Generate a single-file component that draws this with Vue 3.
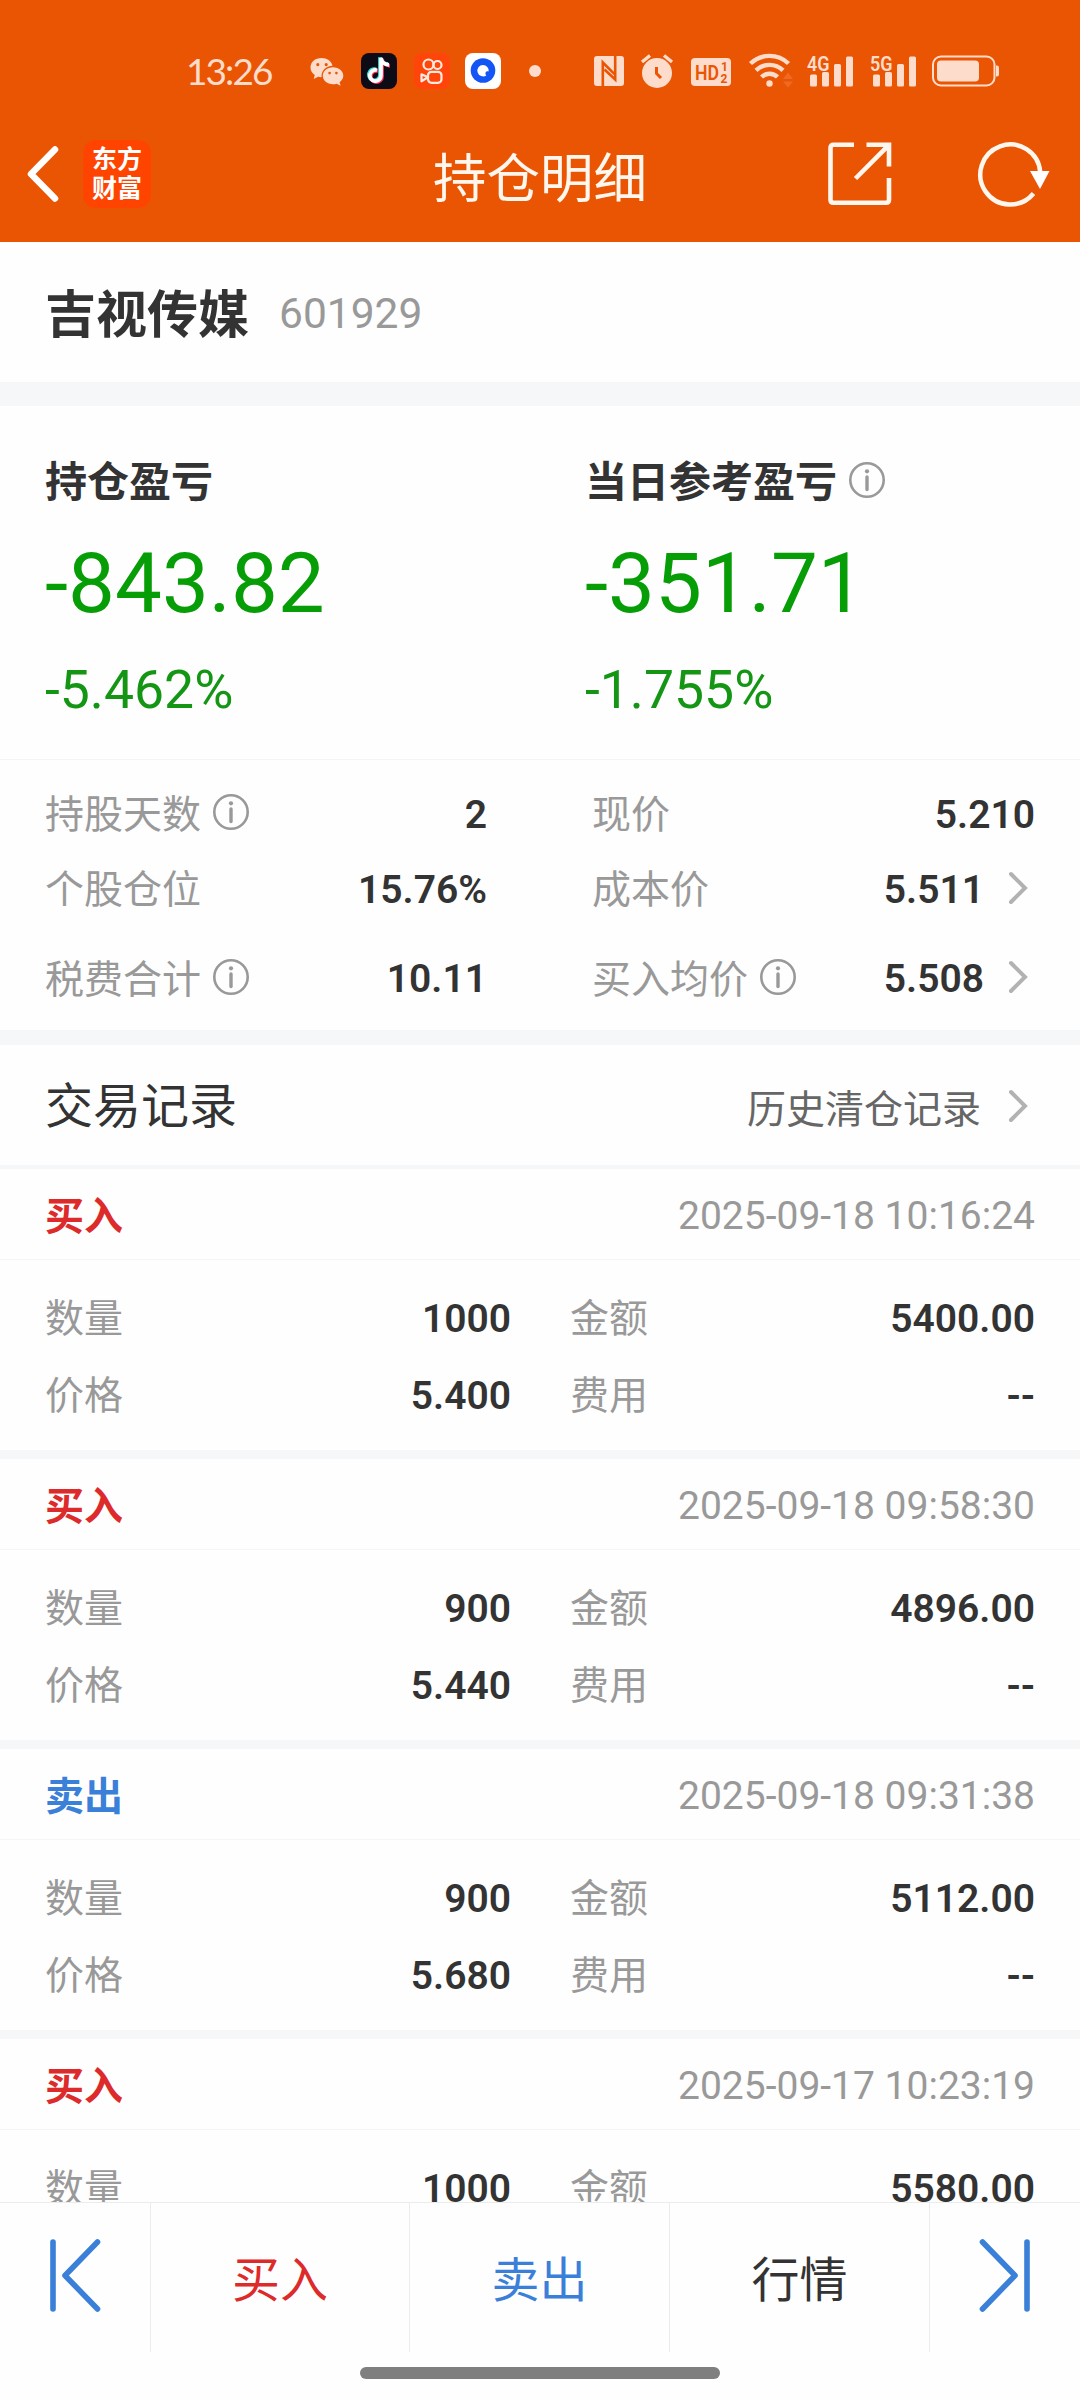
<script setup>
import { ref } from 'vue'

const stock = ref({ name: '吉视传媒', code: '601929' })

const summary = ref([
  { title: '持仓盈亏', amount: '-843.82', rate: '-5.462%', info: false },
  { title: '当日参考盈亏', amount: '-351.71', rate: '-1.755%', info: true }
])

const details = ref([
  { label: '持股天数', value: '2', info: true },
  { label: '现价', value: '5.210' },
  { label: '个股仓位', value: '15.76%' },
  { label: '成本价', value: '5.511', link: true },
  { label: '税费合计', value: '10.11', info: true },
  { label: '买入均价', value: '5.508', info: true, link: true }
])

const records = ref([
  { type: 'buy', time: '2025-09-18 10:16:24', count: '1000', amount: '5400.00', price: '5.400', fee: '--' },
  { type: 'buy', time: '2025-09-18 09:58:30', count: '900', amount: '4896.00', price: '5.440', fee: '--' },
  { type: 'sell', time: '2025-09-18 09:31:38', count: '900', amount: '5112.00', price: '5.680', fee: '--' },
  { type: 'buy', time: '2025-09-17 10:23:19', count: '1000', amount: '5580.00' }
])

const typeText = { buy: '买入', sell: '卖出' }
const networks = ['4G', '5G']
</script>

<template>
  <div class="page">
    <header class="top">
      <!-- 状态栏 -->
      <div class="status">
        <span class="clock">13:26</span>
        <svg class="s-wechat" width="34" height="30" viewBox="0 0 34 30">
          <path fill="#fddccb" fill-rule="evenodd" d="M11.5 1C5 1 .5 5 .5 10.5c0 3.200 1.600 5.800 4.300 7.500L3.700 22l4.300-2.300c1.200.3 2.300.5 3.500.5C11.200 13.500 16 9 22.500 8.800 21.500 4 17 1 11.500 1zM7.800 6a1.600 1.600 0 1 1 0 3.200 1.600 1.600 0 0 1 0-3.200zm8.400 0a1.600 1.600 0 1 1 0 3.200 1.600 1.600 0 0 1 0-3.200z" />
          <path fill="#fddccb" fill-rule="evenodd" d="M23 10.300c-5.800 0-10.200 3.700-10.200 8.500s4.400 8.500 10.200 8.500c1.300 0 2.500-.2 3.600-.6l4 2-1-3.500c2.300-1.600 3.700-3.800 3.700-6.400 0-4.800-4.500-8.500-10.300-8.500zm-3.400 4.500a1.300 1.300 0 1 1 0 2.600 1.300 1.300 0 0 1 0-2.600zm6.800 0a1.300 1.300 0 1 1 0 2.600 1.300 1.300 0 0 1 0-2.600z" />
        </svg>
        <svg class="s-tiktok" width="36" height="36" viewBox="0 0 36 36">
          <rect width="36" height="36" rx="8" fill="#0c0b16" />
          <g fill="none" stroke-width="3.800">
            <path stroke="#31e2e0" d="M16 17.200a5.600 5.600 0 1 0 4 5.300V5c.4 3.800 3.400 6.700 8 6.900" transform="translate(-1 -.8)" />
            <path stroke="#f5365c" d="M16 17.200a5.600 5.600 0 1 0 4 5.300V5c.4 3.800 3.400 6.700 8 6.900" transform="translate(1 .9)" />
            <path stroke="#fff" d="M16 17.200a5.600 5.600 0 1 0 4 5.300V5c.4 3.800 3.400 6.700 8 6.900" />
          </g>
        </svg>
        <svg class="s-kuaishou" width="36" height="36" viewBox="0 0 36 36">
          <rect width="36" height="36" rx="8" fill="#ff450a" />
          <g fill="none" stroke="#ffeadf" stroke-width="2.200">
            <circle cx="14.500" cy="11.500" r="5" />
            <circle cx="23.500" cy="12" r="4" />
            <rect x="14" y="18.800" width="13.500" height="11" rx="3.500" />
            <path d="M14 24.300l-6.500-3v7z" stroke-linejoin="round" />
          </g>
        </svg>
        <svg class="s-browser" width="36" height="36" viewBox="0 0 36 36">
          <rect width="36" height="36" rx="8" fill="#fff" />
          <circle cx="18" cy="17.500" r="12.300" fill="#1456f5" />
          <path fill="#fff" d="M18 12a5.700 5.700 0 0 1 5.700 6.400c-1.700-.4-3 .2-3.200 1.500-.2 1.200.3 1.900.8 2.500A5.700 5.700 0 1 1 18 12z" />
        </svg>
        <span class="dot"></span>

        <svg class="s-nfc" width="30" height="30" viewBox="0 0 30 30">
          <rect width="30" height="30" rx="3" fill="#fddccb" />
          <path d="M8.800 30V6.500L20.500 18.200M21.200 0v23.500L10.500 13.500" fill="none" stroke="#ea5504" stroke-width="2.600" />
        </svg>
        <svg class="s-alarm" width="32" height="34" viewBox="0 0 32 34">
          <circle cx="16" cy="19" r="15" fill="#fddccb" />
          <path d="M1 8l8-6.500M31 8l-8-6.500" stroke="#fddccb" stroke-width="3.500" />
          <path d="M15.500 13v6.500l4.500 4.500" fill="none" stroke="#ea5504" stroke-width="3" />
        </svg>
        <svg class="s-hd" width="40" height="28" viewBox="0 0 40 28">
          <rect width="40" height="28" rx="4" fill="#fddccb" />
          <text class="hd-text" x="4" y="21.500" textLength="24" lengthAdjust="spacingAndGlyphs">HD</text>
          <text class="hd-num" x="30" y="12.500">1</text>
          <text class="hd-num" x="29.500" y="24.500">2</text>
        </svg>
        <svg class="s-wifi" width="45" height="36" viewBox="0 0 45 36">
          <g fill="none" stroke="#fddccb" stroke-width="4.400">
            <path d="M1.500 11.500a27.500 27.500 0 0 1 38 0" />
            <path d="M7 18.300a19.500 19.500 0 0 1 27 0" />
            <path d="M12.500 25a11.500 11.500 0 0 1 16 0" />
          </g>
          <circle cx="20.500" cy="31.500" r="3.200" fill="#fddccb" />
          <path d="M39 20.500l5 6.500H34zM39 35.500l5-6H34z" fill="#f06a26" />
        </svg>
        <svg v-for="n in networks" :key="n" class="s-signal" width="47" height="34" viewBox="0 0 47 34">
          <text class="net-text" x="0" y="16.500" textLength="22.500" lengthAdjust="spacingAndGlyphs">{{ n }}</text>
          <g fill="#fddccb">
            <rect x="3" y="20.500" width="7" height="12" rx="1.500" />
            <rect x="15" y="18" width="7" height="14.500" rx="1.500" />
            <rect x="27" y="10" width="7" height="22.500" rx="1.500" />
            <rect x="39" y="2.500" width="7" height="30" rx="1.500" />
          </g>
        </svg>
        <svg class="s-battery" width="68" height="32" viewBox="0 0 68 32">
          <rect x="1" y="1.500" width="61.500" height="29" rx="8" fill="none" stroke="#fddccb" stroke-width="2" />
          <rect x="5" y="5.500" width="42" height="21" rx="4" fill="#fddccb" />
          <path d="M64 10.500h1q2 0 2 2v7q0 2-2 2h-1z" fill="#fddccb" />
        </svg>
      </div>

      <!-- 导航栏 -->
      <div class="nav">
        <div class="nav-side">
          <svg class="back" width="34" height="58" viewBox="0 0 34 58">
            <path d="M29 4.500L5 29l24 24.500" fill="none" stroke="#fff" stroke-width="6.500" stroke-linecap="round" stroke-linejoin="round" />
          </svg>
          <div class="logo"><span>东方</span><span>财富</span></div>
        </div>
        <h1 class="nav-title">持仓明细</h1>
        <div class="nav-side nav-right">
          <svg class="share" width="64" height="64" viewBox="0 0 64 64">
            <g fill="none" stroke="#fff7ee" stroke-width="4.600">
              <path d="M26 2.800H5.500q-3 0-3 3v52q0 3 3 3h52.500q3 0 3-3V36" />
              <path d="M38.500 2.800H61V24.500M61 2.800L27.500 36.500" />
            </g>
          </svg>
          <svg class="refresh" width="74" height="66" viewBox="0 0 74 66">
            <path d="M55.500 52.500A30 30 0 1 1 62.200 31" fill="none" stroke="#fff7ee" stroke-width="4.500" />
            <path d="M52 30h19.500L62 48z" fill="#fff" />
          </svg>
        </div>
      </div>
    </header>

    <section class="stock">
      <span class="stock-name">{{ stock.name }}</span>
      <span class="stock-code">{{ stock.code }}</span>
    </section>

    <section class="summary">
      <div v-for="s in summary" :key="s.title" class="summary-item">
        <div class="summary-title">
          {{ s.title }}
          <svg v-if="s.info" class="info" width="36" height="36" viewBox="0 0 36 36">
            <circle cx="18" cy="18" r="16.700" fill="none" stroke="#999" stroke-width="2.600" />
            <circle cx="18" cy="9.300" r="2.100" fill="#999" />
            <path d="M18 15v12.500" stroke="#999" stroke-width="3.400" stroke-linecap="round" />
          </svg>
        </div>
        <div class="summary-amount">{{ s.amount }}</div>
        <div class="summary-rate">{{ s.rate }}</div>
      </div>
    </section>

    <section class="details">
      <div v-for="d in details" :key="d.label" class="detail">
        <span class="label">{{ d.label }}</span>
        <svg v-if="d.info" class="info" width="36" height="36" viewBox="0 0 36 36">
          <circle cx="18" cy="18" r="16.700" fill="none" stroke="#999" stroke-width="2.600" />
          <circle cx="18" cy="9.300" r="2.100" fill="#999" />
          <path d="M18 15v12.500" stroke="#999" stroke-width="3.400" stroke-linecap="round" />
        </svg>
        <span class="value">{{ d.value }}</span>
        <svg v-if="d.link" class="arrow" width="20" height="34" viewBox="0 0 20 34">
          <path d="M3 3l14 14L3 31" fill="none" stroke="#b2b2b2" stroke-width="4" stroke-linecap="round" />
        </svg>
      </div>
    </section>

    <section class="trade-head">
      <h2>交易记录</h2>
      <div class="history">
        历史清仓记录
        <svg class="arrow" width="20" height="34" viewBox="0 0 20 34">
          <path d="M3 3l14 14L3 31" fill="none" stroke="#b2b2b2" stroke-width="4" stroke-linecap="round" />
        </svg>
      </div>
    </section>

    <main class="records">
      <article v-for="r in records" :key="r.time" class="record">
        <div class="record-head">
          <span class="type" :class="r.type">{{ typeText[r.type] }}</span>
          <span class="time">{{ r.time }}</span>
        </div>
        <div class="record-body">
          <span class="label">数量</span><span class="value">{{ r.count }}</span>
          <span class="label second">金额</span><span class="value">{{ r.amount }}</span>
          <template v-if="r.price">
            <span class="label">价格</span><span class="value">{{ r.price }}</span>
            <span class="label second">费用</span><span class="value">{{ r.fee }}</span>
          </template>
        </div>
      </article>
    </main>

    <footer class="bottom">
      <div class="tabs">
        <div class="tab">
          <svg class="prev" width="52" height="76" viewBox="0 0 52 76">
            <path d="M4 4v67M48.500 4L16 37.500l32.500 33.500" fill="none" stroke="#3a80d9" stroke-width="5.600" stroke-linecap="round" stroke-linejoin="round" />
          </svg>
        </div>
        <div class="tab buy">买入</div>
        <div class="tab sell">卖出</div>
        <div class="tab">行情</div>
        <div class="tab">
          <svg class="next" width="52" height="76" viewBox="0 0 52 76">
            <path d="M48 4v67M3.500 4L36 37.500L3.500 71" fill="none" stroke="#3a80d9" stroke-width="5.600" stroke-linecap="round" stroke-linejoin="round" />
          </svg>
        </div>
      </div>
      <div class="home-bar"></div>
    </footer>
  </div>
</template>

<style>
body { margin: 0; background: #fff; }
</style>

<style scoped>
.page {
  width: 1080px; height: 2400px; overflow: hidden;
  display: flex; flex-direction: column;
  background: #fefefe; color: #333;
  font-family: Roboto, "Noto Sans CJK SC", sans-serif;
}
svg { display: block; flex: none; overflow: visible; }
h1, h2 { margin: 0; font-weight: 400; }

/* 顶部 */
.top { flex: none; height: 242px; background: #ea5504; }
.status {
  box-sizing: border-box; height: 106px;
  padding: 36px 0 0 186px;
  display: flex; align-items: center;
}
.clock {
  width: 124px; font-family: Lato, sans-serif;
  font-size: 37px; line-height: 44px; letter-spacing: -1.900px; color: #fddccb;
}
.s-wechat { margin-top: 2px; }
.s-tiktok { margin-left: 17px; }
.s-kuaishou { margin-left: 17px; }
.s-browser { margin-left: 15px; }
.dot { width: 12px; height: 12px; margin-left: 28px; border-radius: 50%; background: #fddccb; }
.s-nfc { margin-left: 53px; }
.s-alarm { margin-left: 17px; }
.s-hd { margin-left: 18px; margin-top: 2px; }
.s-wifi { margin-left: 18px; margin-top: -2px; }
.s-signal { margin-left: 13px; }
.s-signal + .s-signal { margin-left: 16px; }
.s-battery { margin-left: 15px; }
.hd-text { font: 600 21px Roboto, sans-serif; fill: #ea5504; }
.hd-num { font: 700 12px Roboto, sans-serif; fill: #ea5504; }
.net-text { font: 600 21px Roboto, sans-serif; fill: #fddccb; }

.nav { height: 136px; display: flex; align-items: center; }
.nav-side { flex: 1; display: flex; align-items: center; }
.back { margin-left: 26px; }
.logo {
  width: 68px; height: 68px; margin-left: 23px; border-radius: 13px;
  background: #ff4400; color: #fff;
  display: flex; flex-direction: column; align-items: center; justify-content: center;
  font-size: 25px; line-height: 29px; font-weight: 700;
}
.nav-title { padding-top: 12px; font-size: 53.500px; line-height: 64px; color: #fff7ee; }
.nav-right { justify-content: flex-end; }
.refresh { margin-left: 86px; margin-right: 28px; }

/* 股票名称 */
.stock {
  flex: none; height: 140px; padding: 0 45px;
  display: flex; align-items: center;
  border-bottom: 24px solid #f6f7f9;
}
.stock-name { padding-top: 7px; font-size: 51px; line-height: 60px; font-weight: 700; }
.stock-code { margin-left: 30px; padding-top: 4px; font-size: 42.500px; line-height: 50px; color: #999; }

/* 盈亏 */
.summary {
  flex: none; box-sizing: border-box; height: 354px; padding: 52px 0 0 45px;
  display: flex; border-bottom: 1px solid #f4f4f5;
}
.summary-item { flex: none; width: 540px; }
.summary-title { display: flex; align-items: center; height: 50px; font-size: 42px; line-height: 50px; font-weight: 700; }
.summary-title .info { margin-left: 12px; margin-bottom: 6px; }
.summary-amount { margin-top: 26px; font-size: 83.500px; line-height: 100px; color: #069d06; }
.summary-rate { margin-top: 24px; font-size: 53.500px; line-height: 64px; color: #149614; }

/* 持仓详情 */
.details {
  flex: none; box-sizing: border-box; height: 285px; padding: 16px 45px 0;
  display: grid; grid-template-columns: 442px 443px; column-gap: 105px;
  grid-template-rows: 75px 75px 104px;
  border-bottom: 15px solid #f6f7f9;
}
.detail { display: flex; align-items: center; padding-top: 2px; }
.label { font-size: 39px; line-height: 48px; color: #999; }
.value { font-size: 39px; line-height: 48px; font-weight: 600; }
.detail .info { margin-left: 12px; margin-bottom: 5px; }
.detail .value { margin-left: auto; }
.detail .label { padding-top: 1px; }
.arrow { margin-left: 24px; margin-right: 7px; margin-bottom: 4px; }

/* 交易记录 */
.trade-head {
  flex: none; box-sizing: border-box; height: 124px; padding: 4px 45px 0;
  display: flex; align-items: center; justify-content: space-between;
  border-bottom: 4px solid #f6f7f9;
}
.trade-head h2 { font-size: 48px; line-height: 60px; }
.history { display: flex; align-items: center; padding-top: 6px; font-size: 39px; line-height: 48px; color: #666; }
.history .arrow { margin-left: 27px; margin-bottom: 8px; }
.records { flex: 1; min-height: 0; overflow: hidden; }
.record { border-bottom: 9px solid #f6f7f9; }
.record-head {
  box-sizing: border-box; height: 91px; padding: 4px 45px 0; border-bottom: 1px solid #f4f5f6;
  display: flex; align-items: center; justify-content: space-between;
}
.type { padding-top: 1px; font-size: 39px; line-height: 48px; font-weight: 700; }
.time { font-size: 39px; line-height: 48px; color: #999; }
.buy { color: #dd2a2a; }
.sell { color: #3a80d9; }
.record-body {
  padding: 20px 45px 16px;
  display: grid; grid-template-columns: 100px 366px 159px 1fr;
  grid-auto-rows: 77px; align-items: center;
}
.record-body .value { text-align: right; }
.second { padding-left: 59px; }

/* 底部 */
.bottom { flex: none; height: 198px; background: #fefefe; }
.tabs {
  box-sizing: border-box; height: 150px; border-top: 1px solid #ebebeb;
  display: grid; grid-template-columns: 151px 259px 260px 260px 150px;
}
.tab {
  display: flex; align-items: center; justify-content: center;
  padding-top: 6px; font-size: 48px; line-height: 60px;
  border-right: 1px solid #ebebeb;
}
.tab:last-child { border-right: none; }
.prev, .next { margin-bottom: 9px; }
.home-bar { width: 360px; height: 12px; margin: 15px auto 0; border-radius: 6px; background: #7f7f7f; }
</style>
